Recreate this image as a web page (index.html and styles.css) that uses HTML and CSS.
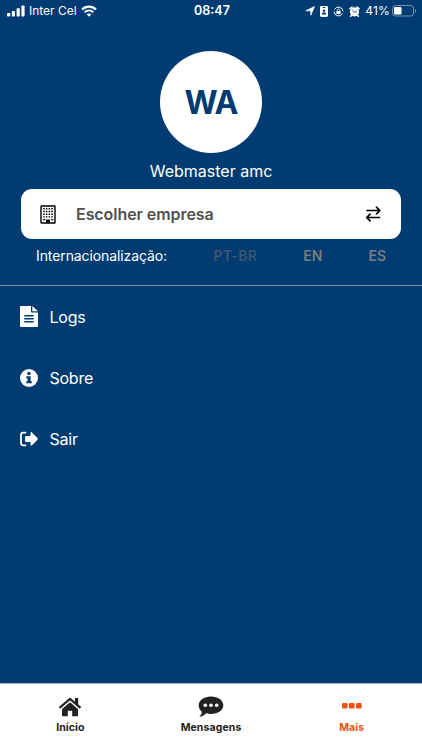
FILE: index.html
```html
<!DOCTYPE html>
<html lang="pt-BR">
<head>
    <meta charset="UTF-8">
    <meta name="viewport" content="width=device-width, initial-scale=1.0">
    <title>Mais</title>
    <link rel="stylesheet" href="styles.css">
</head>
<body>
    <div class="app">
        <header class="status-bar">
            <div class="status-left">
                <svg class="signal" width="18" height="12" viewBox="0 0 18 12" fill="#fff">
                    <rect x="0" y="8" width="3.2" height="3.5" rx="0.8"/>
                    <rect x="4.8" y="6" width="3.2" height="5.5" rx="0.8"/>
                    <rect x="9.6" y="3.2" width="3.2" height="8.3" rx="0.8"/>
                    <rect x="14.4" y="0.5" width="3.2" height="11" rx="0.8"/>
                </svg>
                <span class="carrier">Inter Cel</span>
                <svg width="16" height="12" viewBox="0 0 16 12" fill="none" stroke="#fff" stroke-width="2.1">
                    <path d="M1 4.6C5 .6 11 .6 15 4.6"/>
                    <path d="M3.7 7.3c2.5-2.4 6.1-2.4 8.6 0"/>
                    <path d="M8 11.7L5.6 9.3c1.4-1.2 3.4-1.2 4.8 0z" fill="#fff" stroke="none"/>
                </svg>
            </div>
            <div class="clock">08:47</div>
            <div class="status-right">
                <svg width="10" height="10" viewBox="0 0 10 10" fill="#fff">
                    <path d="M9.5.5L5.8 9.2V4.800H.8z" stroke="#fff" stroke-width="0.7"/>
                </svg>
                <svg width="8" height="11" viewBox="0 0 8 11">
                    <rect width="8" height="11" rx="1.4" fill="#fff"/>
                    <path d="M2.7 1.5h2.6" stroke="#003b71"/>
                    <circle cx="4" cy="4.7" r="1.2" fill="#003b71"/>
                    <path d="M1.8 8.6c0-3 4.4-3 4.4 0z" fill="#003b71"/>
                </svg>
                <svg width="11" height="11" viewBox="0 0 11 11" fill="none" stroke="#fff">
                    <path d="M1.5 3.5A4.5 4.5 0 0 1 10 5.5M9.5 7.5A4.5 4.5 0 0 1 1 5.5"/>
                    <rect x="3.4" y="5" width="4.2" height="3" rx="0.5" fill="#fff" stroke="none"/>
                    <path d="M4.3 5.2v-.9c0-1.6 2.4-1.6 2.4 0v.9" stroke-width="0.8"/>
                </svg>
                <svg width="11" height="11" viewBox="0 0 11 11">
                    <circle cx="5.5" cy="5.8" r="4.6" fill="#fff"/>
                    <path d="M1 2.700l2-1.700M10 2.700l-2-1.700M2.600 9.200l-1 1M8.400 9.200l1 1" stroke="#fff" stroke-width="1.6" stroke-linecap="round"/>
                    <path d="M3.3 4.1l2.3 2.2L7.8 5" fill="none" stroke="#003b71" stroke-width="0.9"/>
                </svg>
                <span class="percent">41%</span>
                <svg class="battery" width="25" height="12" viewBox="0 0 25 12">
                    <rect x="0.5" y="0.5" width="21" height="10.5" rx="3" fill="none" stroke="#7893ad"/>
                    <rect x="2" y="2" width="7.5" height="7.5" rx="1.3" fill="#fff"/>
                    <path d="M23 4v4c1.6-.7 1.6-3.3 0-4z" fill="#7893ad"/>
                </svg>
            </div>
        </header>

        <section class="profile">
            <div class="avatar">WA</div>
            <div class="user-name">Webmaster amc</div>
            <button class="company" type="button">
                <svg width="16" height="19" viewBox="0 0 16 19">
                    <rect x="1" y="1" width="14" height="17" rx="0.5" fill="none" stroke="#000" stroke-width="1.4"/>
                    <path d="M3.2 3.8h10M3.2 6.5h10M3.2 9.2h10M3.2 11.9h10" stroke="#000" stroke-width="1.4" stroke-dasharray="1.5 1.2"/>
                    <path d="M3.2 14.6h2M11.3 14.6h2" stroke="#000" stroke-width="1.4"/>
                    <path d="M6 18v-3.5h4V18z" fill="#000"/>
                </svg>
                <span class="company-label">Escolher empresa</span>
                <svg width="16" height="16" viewBox="0 0 16 16" fill="none" stroke="#000" stroke-width="1.7" stroke-linecap="round">
                    <path d="M2 4.500h12.500M11.500 1.200l3.200 3.300-3.200 3.300"/>
                    <path d="M14.500 11.500H2M5 8.200l-3.200 3.300L5 14.800"/>
                </svg>
            </button>
            <div class="languages">
                <span class="languages-label">Internacionalização:</span>
                <span class="lang lang-active">PT-BR</span>
                <span class="lang lang-en">EN</span>
                <span class="lang">ES</span>
            </div>
        </section>

        <nav class="menu">
            <a class="menu-item">
                <svg width="18" height="21" viewBox="0 0 18 21">
                    <path d="M1.3 0H11v5.3c0 .8.4 1.2 1.2 1.2H18v13.2c0 .8-.5 1.3-1.3 1.3H1.3C.5 21 0 20.5 0 19.7V1.3C0 .5.5 0 1.3 0z" fill="#fff"/>
                    <path d="M12.3 0v5.2H18z" fill="#fff"/>
                    <path d="M4.3 9.7h9.4M4.3 12.7h9.4M4.3 15.7h9.4" stroke="#003b71" stroke-width="1.4"/>
                </svg>
                <span>Logs</span>
            </a>
            <a class="menu-item">
                <svg width="18" height="18" viewBox="0 0 18 18">
                    <circle cx="9" cy="9" r="9" fill="#fff"/>
                    <circle cx="9" cy="4.5" r="1.7" fill="#003b71"/>
                    <path d="M6.3 7.3h4.3v4.9h1.2v2.1H6.3v-2.1h1.2V9.3H6.3z" fill="#003b71"/>
                </svg>
                <span>Sobre</span>
            </a>
            <a class="menu-item">
                <svg width="18" height="16" viewBox="0 0 18 16">
                    <path d="M5.500 1.700H3.200C1.800 1.700 1 2.500 1 3.900v8.200c0 1.400.8 2.200 2.200 2.200h2.300" fill="none" stroke="#fff" stroke-width="1.8" stroke-linecap="round"/>
                    <path d="M6 5h4.500V2c0-.9.9-1.200 1.500-.6l5.500 5.700c.5.500.5 1.100 0 1.600L12 14.300c-.6.600-1.500.3-1.500-.5V11H6c-.5 0-.9-.4-.9-.9V5.900c0-.5.4-.9.9-.9z" fill="#fff"/>
                </svg>
                <span>Sair</span>
            </a>
        </nav>

        <footer class="tab-bar">
            <a class="tab">
                <svg width="24" height="20" viewBox="0 0 24 20" fill="#222">
                    <path d="M12 5.300l-8 6.800v6.400c0 .5.4.8.8.8h5v-5.500h4.400v5.500h5c.5 0 .8-.3.8-.8v-6.400z"/>
                    <path d="M1.500 10.800L12 2l10.500 8.800" fill="none" stroke="#222" stroke-width="2.200"/>
                    <path d="M17 1h3.200v7.500L17 5.900z"/>
                </svg>
                <span>Início</span>
            </a>
            <a class="tab">
                <svg width="26" height="22" viewBox="0 0 26 22">
                    <path d="M13 .5C20 .5 25.300 4.300 25.300 9.300S20 18 13 18c-1.700 0-3.300-.2-4.800-.7C6.400 19 4 20.900 1.400 21c1.300-1.500 2.300-3.200 2.500-5C2 14.300.7 12 .7 9.300.7 4.300 6 .5 13 .5z" fill="#222"/>
                    <g fill="#fff">
                        <circle cx="7.3" cy="9.3" r="1.8"/>
                        <circle cx="13" cy="9.3" r="1.8"/>
                        <circle cx="18.700" cy="9.3" r="1.8"/>
                    </g>
                </svg>
                <span>Mensagens</span>
            </a>
            <a class="tab tab-active">
                <svg width="20" height="20" viewBox="0 0 20 20" fill="#f1500f">
                    <rect x="0" y="6" width="5.6" height="5.6" rx="1.3"/>
                    <rect x="7" y="6" width="5.6" height="5.6" rx="1.3"/>
                    <rect x="14" y="6" width="5.6" height="5.6" rx="1.3"/>
                </svg>
                <span>Mais</span>
            </a>
        </footer>
    </div>
</body>
</html>
```
FILE: styles.css
```css
* {
    box-sizing: border-box;
}

body {
    margin: 0;
    font-family: Inter, "Liberation Sans", sans-serif;
    background: #003b71;
    color: #fff;
}

svg {
    display: block;
    flex-shrink: 0;
}

.app {
    display: flex;
    flex-direction: column;
    height: 750px;
    overflow: hidden;
}

.status-bar {
    display: grid;
    grid-template-columns: 1fr auto 1fr;
    align-items: center;
    height: 22px;
    padding: 0 5px 0 7px;
    font-size: 12px;
    line-height: 22px;
}

.status-left,
.status-right {
    display: flex;
    align-items: center;
    gap: 4px;
}

.status-right {
    justify-content: flex-end;
    gap: 5px;
}

.percent {
    letter-spacing: 0.2px;
}

.clock {
    font-size: 12.5px;
    font-weight: 600;
}

.battery {
    margin-left: -3px;
}

.profile {
    display: flex;
    flex-direction: column;
    align-items: center;
    height: 264px;
    padding: 29px 21px 0;
    border-bottom: 1px solid #8793a0;
}

.avatar {
    width: 102px;
    height: 102px;
    border-radius: 50%;
    background: #fff;
    color: #003b71;
    font-size: 32px;
    font-weight: 700;
    line-height: 104px;
    letter-spacing: -0.8px;
    text-align: center;
}

.user-name {
    height: 36px;
    font-size: 16px;
    line-height: 36px;
}

.company {
    display: flex;
    align-items: center;
    width: 100%;
    height: 50px;
    padding: 0 20px 0 19px;
    border: none;
    border-radius: 11px;
    background: #fff;
    font-family: inherit;
}

.company-label {
    flex: 1;
    margin-left: 20px;
    color: #505050;
    font-size: 16px;
    font-weight: 600;
    letter-spacing: -0.06px;
    text-align: left;
}

.languages {
    display: flex;
    align-self: stretch;
    padding: 0 15px;
    font-size: 14px;
    line-height: 34px;
}

.languages-label {
    flex: 1;
    letter-spacing: -0.1px;
}

.lang {
    color: #7b7d80;
    font-weight: 600;
}

.lang-active {
    color: #3b5672;
    letter-spacing: 0.3px;
}

.lang-en {
    margin: 0 46px;
}

.menu {
    flex: 1;
}

.menu-item {
    display: flex;
    align-items: center;
    gap: 12px;
    height: 61px;
    padding-left: 19.5px;
    font-size: 16px;
    letter-spacing: -0.25px;
}

.tab-bar {
    display: flex;
    height: 67px;
    border-top: 1px solid #a9bccd;
    background: #fff;
}

.tab {
    flex: 1;
    display: flex;
    flex-direction: column;
    align-items: center;
    padding-top: 12px;
    color: #222;
    font-size: 10.5px;
    font-weight: 700;
    letter-spacing: 0.1px;
    line-height: 14px;
}

.tab svg {
    height: 22px;
    margin-bottom: 3px;
}

.tab-active {
    color: #f1500f;
}
```
